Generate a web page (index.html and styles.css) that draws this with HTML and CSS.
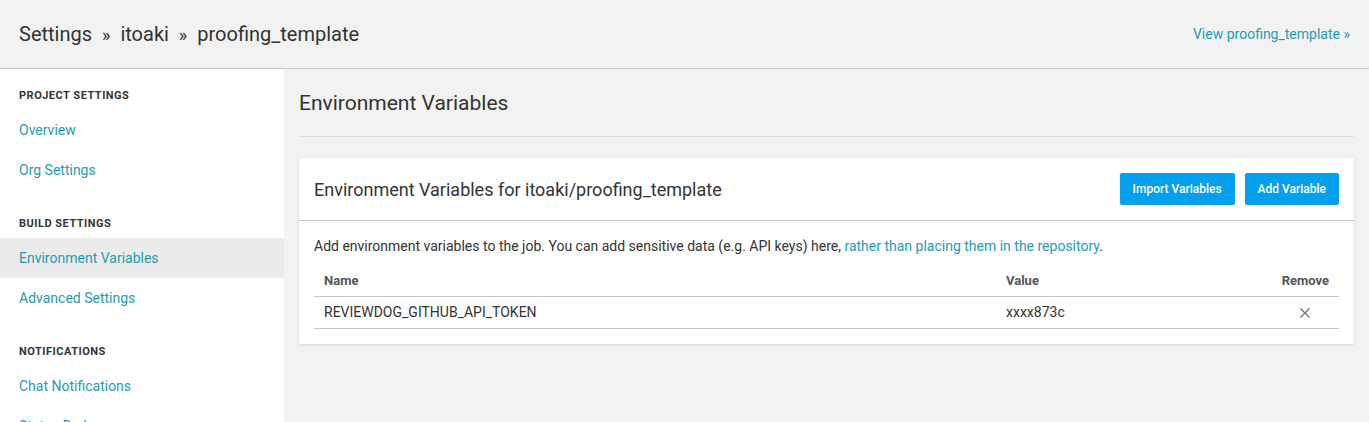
FILE: index.html
```html
<!DOCTYPE html>
<html>
<head>
<meta charset="utf-8">
<link rel="stylesheet" href="styles.css">
</head>
<body>
<header class="topbar">
  <h1 class="crumbs">Settings <span class="sep">»</span> itoaki <span class="sep">»</span> proofing_template</h1>
  <a class="view-link" href="#">View proofing_template »</a>
</header>
<div class="layout">
  <nav class="sidebar">
    <div class="nav-group">
      <div class="nav-title">Project Settings</div>
      <a class="nav-item" href="#">Overview</a>
      <a class="nav-item" href="#">Org Settings</a>
    </div>
    <div class="nav-group">
      <div class="nav-title">Build Settings</div>
      <a class="nav-item active" href="#">Environment Variables</a>
      <a class="nav-item" href="#">Advanced Settings</a>
    </div>
    <div class="nav-group">
      <div class="nav-title">Notifications</div>
      <a class="nav-item" href="#">Chat Notifications</a>
      <a class="nav-item" href="#">Status Badges</a>
    </div>
  </nav>
  <main class="content">
    <h2 class="page-title">Environment Variables</h2>
    <section class="card">
      <div class="card-head">
        <h3 class="card-title">Environment Variables for itoaki/proofing_template</h3>
        <div class="actions">
          <button class="btn">Import Variables</button>
          <button class="btn">Add Variable</button>
        </div>
      </div>
      <div class="card-body">
        <p class="intro">Add environment variables to the job. You can add sensitive data (e.g. API keys) here, <a href="#">rather than placing them in the repository</a>.</p>
        <table class="vars">
          <thead>
            <tr><th class="c-name">Name</th><th class="c-value">Value</th><th class="c-remove">Remove</th></tr>
          </thead>
          <tbody>
            <tr><td class="c-name">REVIEWDOG_GITHUB_API_TOKEN</td><td class="c-value">xxxx873c</td><td class="c-remove"><svg class="x" width="12" height="12" viewBox="0 0 12 12"><path d="M1.5 1.5L10.5 10.5M10.5 1.5L1.5 10.5" stroke="#777" stroke-width="1.4" fill="none"/></svg></td></tr>
          </tbody>
        </table>
      </div>
    </section>
  </main>
</div>
</body>
</html>
```

FILE: styles.css
```css
* { box-sizing: border-box; }
html, body { margin: 0; padding: 0; }
body {
  font-family: Roboto, "Liberation Sans", Arial, sans-serif;
  color: #333;
  background: #f2f2f2;
  height: 422px;
  overflow: hidden;
}
a { color: #1f9cb3; text-decoration: none; }

.topbar {
  height: 69px;
  background: #f2f2f2;
  border-bottom: 1px solid #c8c8c8;
  display: flex;
  align-items: center;
  justify-content: space-between;
  padding: 0 19px 0 19px;
}
.crumbs {
  margin: 0;
  font-size: 20px;
  font-weight: 400;
  color: #333;
}
.crumbs .sep { margin: 0 5px; font-size: 18px; }
.view-link { font-size: 14px; color: #1f9cb3; }

.layout { display: flex; }
.sidebar {
  width: 284px;
  flex: none;
  background: #fff;
  height: 353px;
  padding-top: 20px;
}
.nav-group { margin-bottom: 27px; }
.nav-title {
  text-transform: uppercase;
  font-size: 11px;
  font-weight: 700;
  letter-spacing: 0.5px;
  color: #333;
  padding: 0 19px;
  height: 14px;
  line-height: 14px;
  margin-bottom: 7px;
}
.nav-item {
  display: block;
  font-size: 14px;
  height: 40px;
  line-height: 40px;
  padding: 0 19px;
  color: #1f9cb3;
}
.nav-item.active { background: #ebebeb; }

.content {
  flex: 1;
  padding: 0 15px;
}
.page-title {
  margin: 0;
  font-size: 21px;
  font-weight: 400;
  color: #333;
  height: 68px;
  line-height: 68px;
  border-bottom: 1px solid #ddd;
}
.card {
  margin-top: 21px;
  background: #fff;
  box-shadow: 0 1px 3px rgba(0,0,0,0.12);
}
.card-head {
  display: flex;
  align-items: center;
  justify-content: space-between;
  height: 63px;
  padding: 0 15px;
  border-bottom: 1px solid #c8c8c8;
}
.card-title {
  margin: 0;
  font-size: 18px;
  font-weight: 400;
  color: #333;
}
.actions { display: flex; gap: 10px; }
.btn {
  font-family: Roboto, "Liberation Sans", Arial, sans-serif;
  background: #03a0ee;
  color: #fff;
  border: 0;
  border-radius: 2px;
  font-size: 12px;
  font-weight: 500;
  height: 32px;
  padding: 0 13px;
}
.card-body { padding: 16px 15px 15px; }
.intro {
  margin: 0 0 19px;
  font-size: 14px;
  line-height: 18px;
  color: #333;
}
.vars {
  width: 100%;
  border-collapse: collapse;
  font-size: 14px;
}
.vars th {
  font-size: 13px;
  font-weight: 700;
  color: #555;
  text-align: left;
  line-height: 14px;
  padding: 0 10px 8px;
  border-bottom: 1px solid #c8c8c8;
}
.vars td {
  height: 32px;
  line-height: 31px;
  padding: 0 10px;
  border-bottom: 1px solid #c8c8c8;
  color: #333;
}
.vars .c-name { width: 682px; }
.vars .c-remove { text-align: right; }
.vars td.c-remove { text-align: right; padding-right: 28px; }
.x { display: inline-block; vertical-align: middle; }
```
